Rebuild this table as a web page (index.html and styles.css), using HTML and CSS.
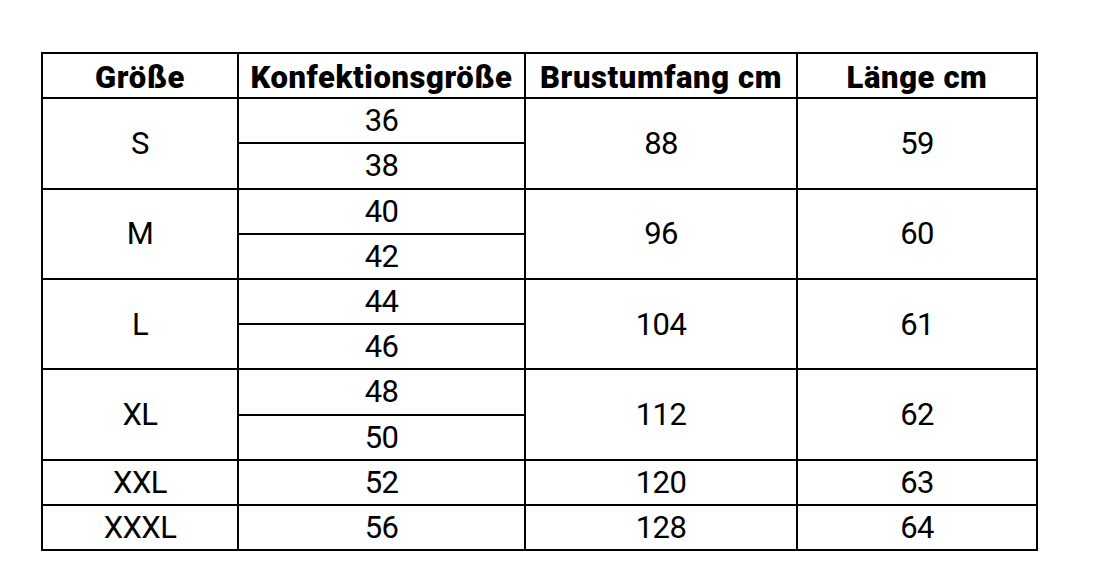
FILE: index.html
```html
<!DOCTYPE html>
<html lang="de">
<head>
<meta charset="utf-8">
<title>Größentabelle</title>
<link rel="stylesheet" href="styles.css">
</head>
<body>
<div class="page">
  <table class="sizes">
    <colgroup>
      <col class="c1"><col class="c2"><col class="c3"><col class="c4">
    </colgroup>
    <thead>
      <tr><th>Größe</th><th>Konfektionsgröße</th><th>Brustumfang cm</th><th>Länge cm</th></tr>
    </thead>
    <tbody>
      <tr><td rowspan="2">S</td><td>36</td><td rowspan="2">88</td><td rowspan="2">59</td></tr>
      <tr><td>38</td></tr>
      <tr><td rowspan="2">M</td><td>40</td><td rowspan="2">96</td><td rowspan="2">60</td></tr>
      <tr><td>42</td></tr>
      <tr><td rowspan="2">L</td><td>44</td><td rowspan="2">104</td><td rowspan="2">61</td></tr>
      <tr><td>46</td></tr>
      <tr><td rowspan="2">XL</td><td>48</td><td rowspan="2">112</td><td rowspan="2">62</td></tr>
      <tr><td>50</td></tr>
      <tr><td>XXL</td><td>52</td><td>120</td><td>63</td></tr>
      <tr><td>XXXL</td><td>56</td><td>128</td><td>64</td></tr>
    </tbody>
  </table>
</div>
</body>
</html>
```

FILE: styles.css
```css
html, body {
  margin: 0;
  padding: 0;
  background: #ffffff;
}
.page {
  padding: 52px 0 0 41px;
}
.sizes {
  border-collapse: collapse;
  table-layout: fixed;
  width: 995px;
  color: #000;
}
.c1 { width: 196px; }
.c2 { width: 287px; }
.c3 { width: 272px; }
.c4 { width: 240px; }
.sizes th,
.sizes td {
  border: 2px solid #000;
  padding: 0;
  height: 43.2px;
  text-align: center;
  vertical-align: middle;
  line-height: 1;
}
.sizes th {
  font-family: Roboto, "Liberation Sans", sans-serif;
  font-weight: 900;
  font-size: 31px;
  letter-spacing: 0.6px;
  padding-top: 3px;
  height: 40.2px;
}
.sizes td {
  font-family: Roboto, "Liberation Sans", sans-serif;
  font-weight: 400;
  font-size: 31px;
  letter-spacing: -0.6px;
}
```
